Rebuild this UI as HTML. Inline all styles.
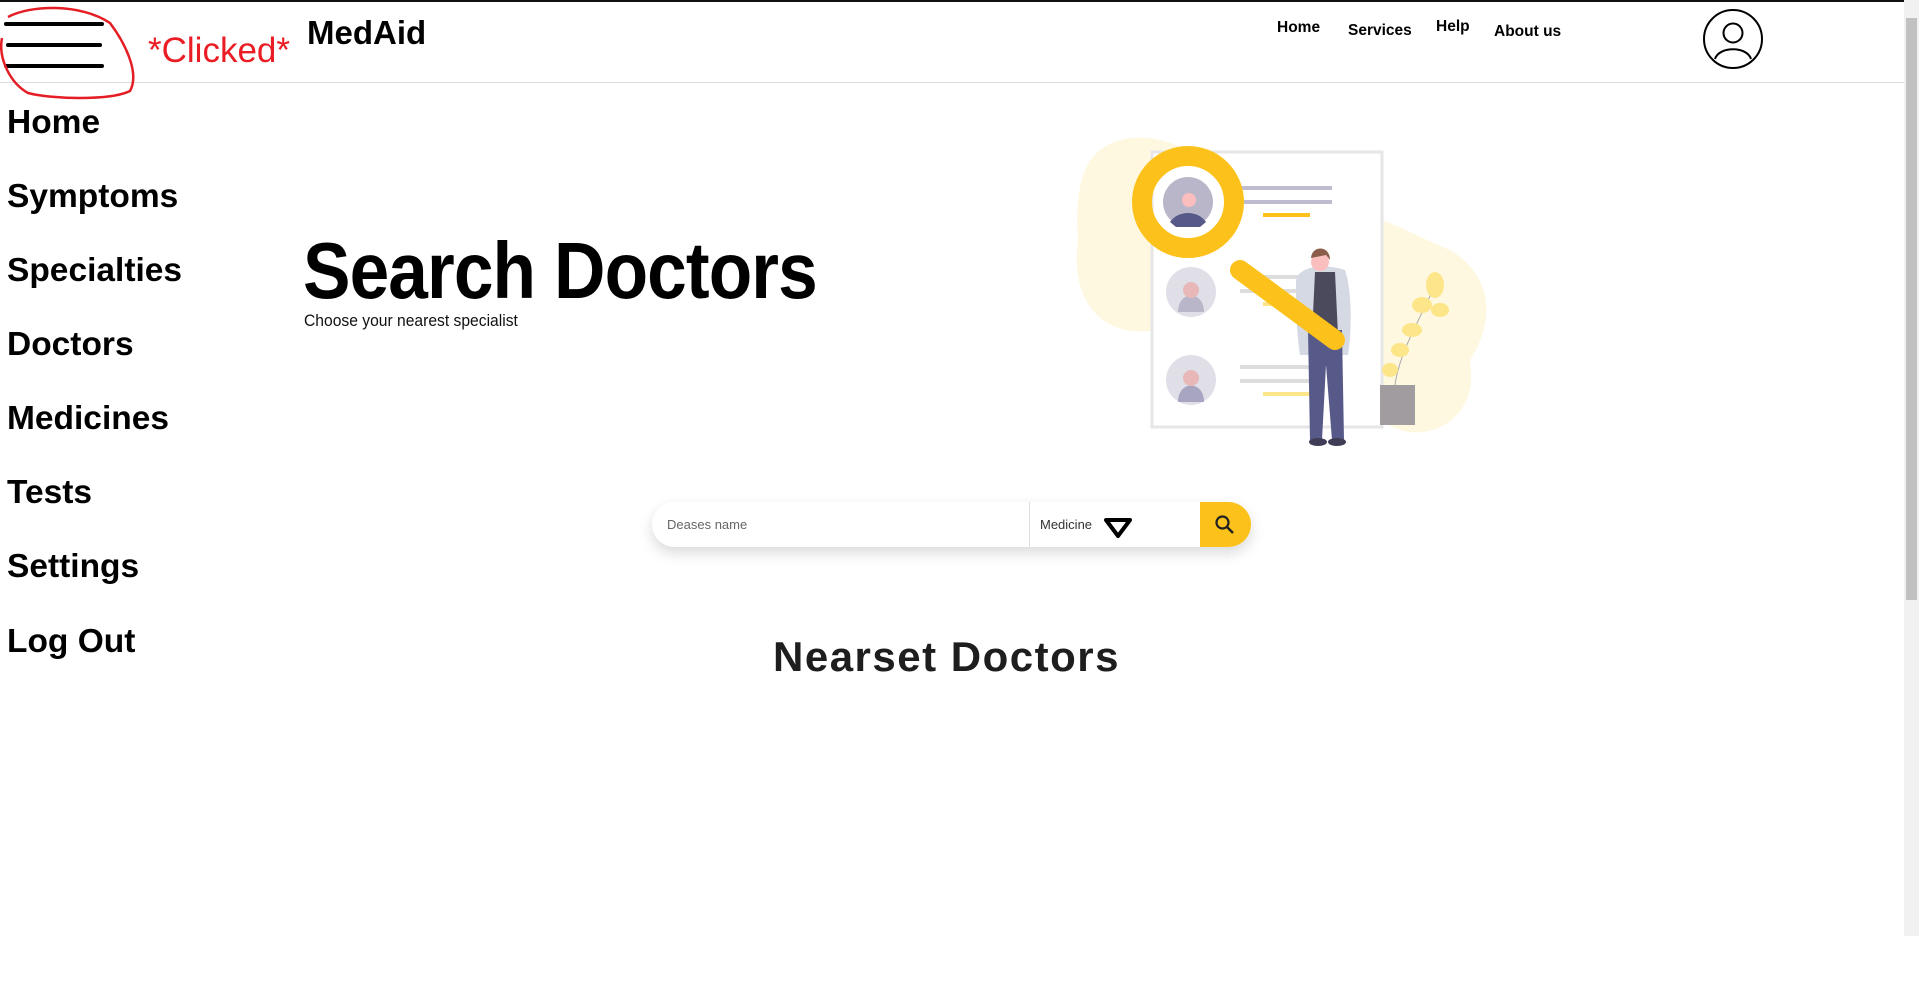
<!DOCTYPE html>
<html><head><meta charset="utf-8"><style>
*{margin:0;padding:0;box-sizing:border-box}
html,body{width:1919px;height:1008px;overflow:hidden;background:#fff;font-family:"Liberation Sans",Arial,sans-serif;color:#000}
.abs{position:absolute;white-space:nowrap}
.topbar{position:absolute;left:0;top:0;width:1904px;height:2px;background:#111}
.hline{position:absolute;left:0;top:82px;width:1904px;height:1px;background:#ddd}
.bar{position:absolute;left:4px;width:100px;height:4px;background:#000;border-radius:2px}
.nav{font-weight:bold;font-size:15.5px}
.side{position:absolute;left:7px;font-weight:bold;font-size:33.5px}
.sb{position:absolute;left:1904px;top:0;width:15px;height:936px;background:#f1f1f1}
.thumb{position:absolute;left:1906px;top:18px;width:11px;height:582px;background:#c1c1c1}
</style></head><body>
<div class="topbar"></div>
<div class="hline"></div>
<div class="bar" style="top:22px"></div>
<div class="bar" style="top:43px;left:6px;width:96px"></div>
<div class="bar" style="top:64px"></div>
<svg class="abs" style="left:0;top:3px" width="145" height="100"><path d="M8 14 C30 2 80 0 110 20 C125 40 140 70 130 88 C110 98 50 96 28 90 C10 80 -2 55 2 35" fill="none" stroke="#e51e25" stroke-width="2.5"/></svg>
<div class="abs" style="left:148px;top:31px;color:#ea1c24;font-size:35px">*Clicked*</div>
<div class="abs" style="left:307px;top:14px;font-weight:bold;font-size:33px">MedAid</div>
<div class="abs nav" style="left:1277px;top:19px">Home</div>
<div class="abs nav" style="left:1348px;top:22px">Services</div>
<div class="abs nav" style="left:1436px;top:18px">Help</div>
<div class="abs nav" style="left:1494px;top:23px">About us</div>
<svg class="abs" style="left:1703px;top:9px" width="62" height="62"><ellipse cx="30" cy="30" rx="29" ry="29" fill="none" stroke="#000" stroke-width="2"/><circle cx="30" cy="24" r="9.5" fill="none" stroke="#000" stroke-width="2"/><path d="M12 50 C16 37 44 37 48 50" fill="none" stroke="#000" stroke-width="2"/></svg>
<div class="side" style="top:104px">Home</div>
<div class="side" style="top:178px">Symptoms</div>
<div class="side" style="top:252px">Specialties</div>
<div class="side" style="top:326px">Doctors</div>
<div class="side" style="top:400px">Medicines</div>
<div class="side" style="top:474px">Tests</div>
<div class="side" style="top:548px">Settings</div>
<div class="side" style="top:623px">Log Out</div>
<div class="abs" style="left:303px;top:225px;font-weight:bold;font-size:80px;letter-spacing:-1px;transform:scaleX(0.89);transform-origin:left top">Search Doctors</div>
<div class="abs" style="left:304px;top:311px;font-size:17px;transform:scaleX(0.92);transform-origin:left top;color:#111">Choose your nearest specialist</div>
<svg class="abs" style="left:1070px;top:130px" width="430" height="330" viewBox="1070 130 430 330">
<path d="M1100 150 C1140 120 1200 150 1230 180 L1300 210 C1360 200 1400 230 1450 250 C1500 280 1490 330 1470 360 C1480 420 1430 440 1400 430 L1160 330 C1100 340 1070 300 1078 240 C1075 200 1080 165 1100 150Z" fill="#fff8e1"/>
<rect x="1152" y="152" width="230" height="275" fill="#fff" stroke="#e6e6e6" stroke-width="3"/>
<rect x="1240" y="186" width="92" height="4" fill="#c0bccf"/><rect x="1240" y="200" width="92" height="4" fill="#c0bccf"/><rect x="1263" y="213" width="47" height="4" fill="#fcc21b"/>
<rect x="1240" y="275" width="70" height="4" fill="#ddd"/><rect x="1240" y="289" width="70" height="4" fill="#ddd"/><rect x="1263" y="302" width="40" height="4" fill="#fde58a"/>
<rect x="1240" y="365" width="70" height="4" fill="#ddd"/><rect x="1240" y="379" width="70" height="4" fill="#ddd"/><rect x="1263" y="392" width="47" height="4" fill="#fde58a"/>
<circle cx="1191" cy="292" r="25" fill="#e0dfe8"/><path d="M1178 312 C1178 290 1204 290 1204 312Z" fill="#b9b6c9"/><circle cx="1191" cy="290" r="8" fill="#e8b8b8"/>
<circle cx="1191" cy="380" r="25" fill="#e0dfe8"/><path d="M1178 402 C1178 380 1204 380 1204 402Z" fill="#a7a5c2"/><circle cx="1191" cy="378" r="8" fill="#e8b8b8"/>
<rect x="1380" y="385" width="35" height="40" fill="#a09ca0"/>
<path d="M1395 385 C1400 350 1420 320 1435 285" stroke="#aaa" fill="none"/><ellipse cx="1435" cy="285" rx="9" ry="13" fill="#fde58a"/><ellipse cx="1422" cy="305" rx="10" ry="8" fill="#fde58a"/><ellipse cx="1440" cy="310" rx="9" ry="7" fill="#fde58a"/><ellipse cx="1412" cy="330" rx="10" ry="7" fill="#fde58a"/><ellipse cx="1400" cy="350" rx="9" ry="7" fill="#fde58a"/><ellipse cx="1390" cy="370" rx="8" ry="7" fill="#fde58a"/>
<path d="M1296 282 C1296 268 1320 262 1345 270 C1352 290 1352 330 1348 355 L1300 355 C1296 330 1296 300 1296 282Z" fill="#d5d9e3"/>
<path d="M1315 272 L1335 272 L1338 335 L1312 335Z" fill="#4a4a5c"/>
<path d="M1308 330 L1342 330 L1344 440 L1332 440 L1326 365 L1322 440 L1310 440Z" fill="#575a89"/>
<ellipse cx="1318" cy="442" rx="9" ry="4" fill="#3f3d56"/><ellipse cx="1337" cy="442" rx="9" ry="4" fill="#3f3d56"/>
<circle cx="1320" cy="262" r="9" fill="#fbbebe"/><path d="M1311 258 C1312 245 1330 245 1330 260 L1326 255Z" fill="#8b5e4b"/>
<path d="M1240 270 L1335 340" stroke="#fcc21b" stroke-width="20" stroke-linecap="round"/>
<circle cx="1188" cy="202" r="46" fill="none" stroke="#fcc21b" stroke-width="20"/>
<circle cx="1188" cy="202" r="25" fill="#b9b6c9"/><path d="M1170 222 C1178 210 1198 210 1206 222 L1200 227 L1176 227Z" fill="#575a89"/><circle cx="1189" cy="200" r="7" fill="#fbbebe"/>
</svg>
<div class="abs" style="left:652px;top:502px;width:599px;height:45px;border-radius:23px;background:#fff;box-shadow:0 6px 14px rgba(0,0,0,0.15);overflow:hidden">
<div class="abs" style="left:15px;top:15px;font-size:13px;color:#666">Deases name</div>
<div class="abs" style="left:377px;top:0;width:1px;height:45px;background:#ddd"></div>
<div class="abs" style="left:388px;top:15px;font-size:13px;color:#333">Medicine</div>
<svg class="abs" style="left:452px;top:16px" width="28" height="20"><path d="M2 2 L26 2 L14 18Z" fill="none" stroke="#000" stroke-width="4" stroke-linejoin="round"/></svg>
<div class="abs" style="left:548px;top:0;width:51px;height:45px;background:#fcc21b"></div>
<svg class="abs" style="left:562px;top:12px" width="22" height="22"><circle cx="8.5" cy="8.5" r="6" fill="none" stroke="#222" stroke-width="2.2"/><path d="M13 13 L19 19" stroke="#222" stroke-width="2.5"/></svg>
</div>
<div class="abs" style="left:773px;top:633px;font-weight:bold;font-size:42px;color:#1e1e1e;letter-spacing:1.5px">Nearset Doctors</div>
<div class="sb"></div><div class="thumb"></div>
</body></html>
